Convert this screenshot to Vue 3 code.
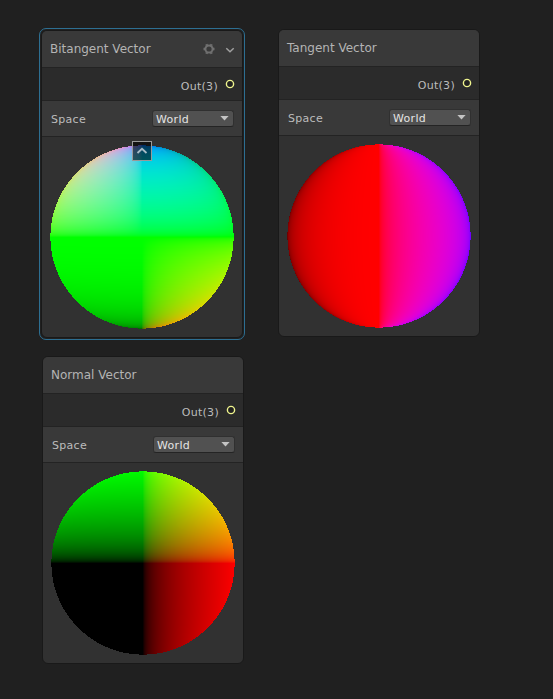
<script setup>
import { onMounted } from 'vue'

const SIZE = 184

const nodes = [
  { id: 'bitangent', title: 'Bitangent Vector', space: 'World', selected: true },
  { id: 'tangent', title: 'Tangent Vector', space: 'World', selected: false },
  { id: 'normal', title: 'Normal Vector', space: 'World', selected: false },
]

const canvases = {}
const setCanvas = (id, el) => {
  if (el) canvases[id] = el
}

// World-space vectors at a point on the unit sphere; w points to the camera.
const fields = {
  normal: (x, y, w) => [x, y, -w],
  tangent: (x, y, w) => {
    const l = Math.hypot(x, w) || 1
    return [w / l, 0, x / l]
  },
  bitangent: (x, y, w) => {
    const l = Math.hypot(x, w) || 1
    return [(-x * y) / l, l, (y * w) / l]
  },
}

const encode = (v) => {
  if (v <= 0) return 0
  const c = v <= 0.0031308 ? v * 12.92 : 1.055 * Math.pow(v, 1 / 2.4) - 0.055
  return Math.round(Math.min(1, c) * 255)
}

function paint(canvas, field) {
  const ctx = canvas.getContext('2d')
  const image = ctx.createImageData(SIZE, SIZE)
  const radius = 91.6
  const half = (7 * Math.PI) / 180
  const dist = 1 / Math.sin(half)
  for (let j = 0; j < SIZE; j++) {
    for (let i = 0; i < SIZE; i++) {
      const sx = (i + 0.5 - SIZE / 2) / radius
      const sy = (SIZE / 2 - j - 0.5) / radius
      const r = Math.hypot(sx, sy)
      if (r > 1) continue
      const phi = Math.atan(r * Math.tan(half))
      const t = dist * Math.cos(phi) - Math.sqrt(Math.max(0, 1 - (dist * Math.sin(phi)) ** 2))
      const p = t * Math.sin(phi)
      const rgb = field((p * sx) / r, (p * sy) / r, dist - t * Math.cos(phi)).map(encode)
      image.data.set([...rgb, 255], (j * SIZE + i) * 4)
    }
  }
  ctx.putImageData(image, 0, 0)
}

onMounted(() => {
  for (const n of nodes) paint(canvases[n.id], fields[n.id])
})
</script>

<template>
  <main class="graph">
    <article
      v-for="n in nodes"
      :key="n.id"
      class="node"
      :class="[n.id, { selected: n.selected }]"
    >
      <header class="title">
        <span class="name">{{ n.title }}</span>
        <template v-if="n.selected">
          <svg class="gear" width="12" height="12" viewBox="0 0 12 12">
            <circle cx="6" cy="6" r="3.6" fill="none" stroke="#707070" stroke-width="2" />
            <path
              d="M10 6H11.5M8 9.5L8.7 10.8M4 9.5L3.3 10.8M2 6H.5M4 2.5L3.3 1.2M8 2.5L8.7 1.2"
              stroke="#707070"
              stroke-width="2.4"
            />
          </svg>
          <svg class="chevron" width="10" height="8" viewBox="0 0 10 8">
            <path d="M1.3 2.2L5 5.7L8.7 2.2" fill="none" stroke="#a0a0a0" stroke-width="1.5" />
          </svg>
        </template>
      </header>
      <section class="ports">
        <span class="label">Out(3)</span>
        <svg class="ring" width="10" height="10" viewBox="0 0 10 10">
          <circle cx="5" cy="5" r="3.6" fill="#212121" stroke="#f0f58e" stroke-width="1.4" />
        </svg>
      </section>
      <section class="controls">
        <span class="label">Space</span>
        <div class="dropdown">
          <span class="value">{{ n.space }}</span>
          <svg width="9" height="5" viewBox="0 0 9 5">
            <path d="M.4 0H8.6L4.5 4.6Z" fill="#c4c4c4" />
          </svg>
        </div>
      </section>
      <section class="preview">
        <canvas :ref="(el) => setCanvas(n.id, el)" :width="SIZE" :height="SIZE"></canvas>
        <div v-if="n.selected" class="collapse">
          <svg width="18" height="18" viewBox="0 0 18 18">
            <path d="M4.5 11L9 6.8L13.5 11" fill="none" stroke="#a9bcc6" stroke-width="1.8" />
          </svg>
        </div>
      </section>
    </article>
  </main>
</template>

<style>
body {
  margin: 0;
  background: #202020;
}
</style>

<style scoped>
.graph {
  position: relative;
  width: 553px;
  height: 699px;
  overflow: hidden;
  background: #202020;
  font-family: 'DejaVu Sans', sans-serif;
  font-size: 11px;
  letter-spacing: 0.3px;
  color: #bcbcbc;
}
.node {
  position: absolute;
  width: 200px;
  height: 306px;
  border: 1px solid #191919;
  border-radius: 6px;
  background: #313131;
}
.bitangent {
  left: 41px;
  top: 30px;
}
.tangent {
  left: 278px;
  top: 29px;
}
.normal {
  left: 42px;
  top: 356px;
}
.selected::before {
  content: '';
  position: absolute;
  inset: -3px;
  border: 1px solid #2d6f92;
  border-radius: 7px;
}
.title {
  box-sizing: border-box;
  height: 37px;
  padding: 0 7px 0 8px;
  display: flex;
  align-items: center;
  background: #393939;
  border-bottom: 1px solid #232323;
  border-radius: 5px 5px 0 0;
  font-size: 12px;
  letter-spacing: 0;
  color: #b4b4b4;
}
.name {
  flex: 1;
}
.chevron {
  margin: 2px 0 0 10px;
}
.ports {
  box-sizing: border-box;
  height: 33px;
  padding-right: 7px;
  display: flex;
  align-items: center;
  justify-content: flex-end;
  gap: 7px;
  background: #2b2b2b;
  border-bottom: 1px solid #232323;
}
.ports .label {
  padding-top: 4px;
}
.controls {
  box-sizing: border-box;
  height: 36px;
  padding: 0 8px 0 9px;
  display: flex;
  align-items: center;
  justify-content: space-between;
  background: #393939;
  border-bottom: 1px solid #232323;
}
.controls .label {
  padding-top: 2px;
}
.dropdown {
  box-sizing: border-box;
  width: 82px;
  height: 17px;
  padding: 0 4px 0 3px;
  display: flex;
  align-items: center;
  justify-content: space-between;
  background: #515151;
  border: 1px solid #303030;
  border-bottom-color: #242424;
  border-radius: 3px;
  color: #e4e4e4;
}
.value {
  padding-top: 2px;
}
.preview {
  position: relative;
  padding: 8px;
}
.preview canvas {
  display: block;
}
.collapse {
  position: absolute;
  left: 90px;
  top: 4px;
  width: 18px;
  height: 18px;
  border: 1px solid #999;
  background: rgba(0, 0, 0, 0.6);
}
.collapse svg {
  display: block;
}
</style>
